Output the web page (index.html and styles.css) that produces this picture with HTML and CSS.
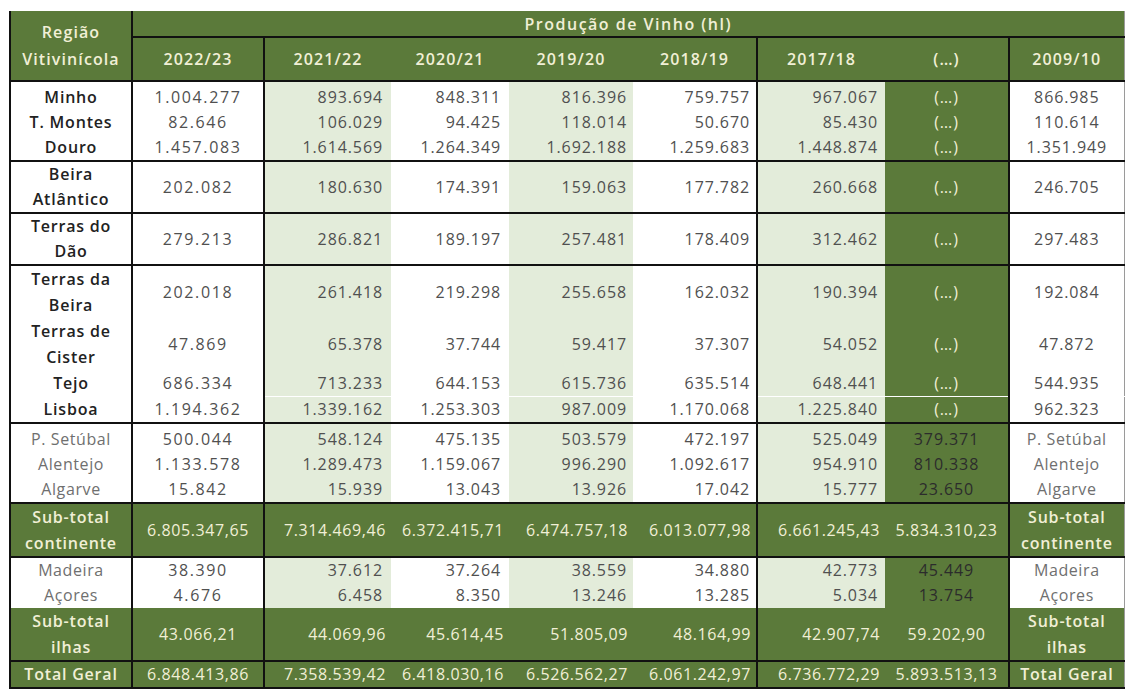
FILE: index.html
```html
<!DOCTYPE html>
<html lang="pt">
<head>
<meta charset="utf-8">
<title>Produção de Vinho</title>
<link rel="stylesheet" href="styles.css">
</head>
<body>
<table class="wine">
  <colgroup>
    <col class="w-reg"><col class="w1"><col class="w2"><col class="w3"><col class="w4"><col class="w5"><col class="w6"><col class="w7"><col class="w8">
  </colgroup>
  <thead>
    <tr class="h1">
      <th class="region" rowspan="2">Região<br>Vitivinícola</th>
      <th class="prod" colspan="8">Produção de Vinho (hl)</th>
    </tr>
    <tr class="h2">
      <th class="bl">2022/23</th>
      <th class="bl">2021/22</th>
      <th>2020/21</th>
      <th>2019/20</th>
      <th>2018/19</th>
      <th class="bl">2017/18</th>
      <th>(…)</th>
      <th class="bl">2009/10</th>
    </tr>
  </thead>
  <tbody>
    <tr class="bt pad-t"><td>Minho</td><td>1.004.277</td><td>893.694</td><td>848.311</td><td>816.396</td><td>759.757</td><td>967.067</td><td>(…)</td><td>866.985</td></tr>
    <tr><td>T. Montes</td><td>82.646</td><td>106.029</td><td>94.425</td><td>118.014</td><td>50.670</td><td>85.430</td><td>(…)</td><td>110.614</td></tr>
    <tr><td>Douro</td><td>1.457.083</td><td>1.614.569</td><td>1.264.349</td><td>1.692.188</td><td>1.259.683</td><td>1.448.874</td><td>(…)</td><td>1.351.949</td></tr>
    <tr class="bt"><td>Beira<br>Atlântico</td><td>202.082</td><td>180.630</td><td>174.391</td><td>159.063</td><td>177.782</td><td>260.668</td><td>(…)</td><td>246.705</td></tr>
    <tr class="bt"><td>Terras do<br>Dão</td><td>279.213</td><td>286.821</td><td>189.197</td><td>257.481</td><td>178.409</td><td>312.462</td><td>(…)</td><td>297.483</td></tr>
    <tr class="bt lh26"><td>Terras da<br>Beira</td><td>202.018</td><td>261.418</td><td>219.298</td><td>255.658</td><td>162.032</td><td>190.394</td><td>(…)</td><td>192.084</td></tr>
    <tr class="lh26"><td>Terras de<br>Cister</td><td>47.869</td><td>65.378</td><td>37.744</td><td>59.417</td><td>37.307</td><td>54.052</td><td>(…)</td><td>47.872</td></tr>
    <tr class="lh26"><td>Tejo</td><td>686.334</td><td>713.233</td><td>644.153</td><td>615.736</td><td>635.514</td><td>648.441</td><td>(…)</td><td>544.935</td></tr>
    <tr class="wt"><td>Lisboa</td><td>1.194.362</td><td>1.339.162</td><td>1.253.303</td><td>987.009</td><td>1.170.068</td><td>1.225.840</td><td>(…)</td><td>962.323</td></tr>
    <tr class="bt pad-t minor"><td>P. Setúbal</td><td>500.044</td><td>548.124</td><td>475.135</td><td>503.579</td><td>472.197</td><td>525.049</td><td>379.371</td><td>P. Setúbal</td></tr>
    <tr class="minor"><td>Alentejo</td><td>1.133.578</td><td>1.289.473</td><td>1.159.067</td><td>996.290</td><td>1.092.617</td><td>954.910</td><td>810.338</td><td>Alentejo</td></tr>
    <tr class="minor"><td>Algarve</td><td>15.842</td><td>15.939</td><td>13.043</td><td>13.926</td><td>17.042</td><td>15.777</td><td>23.650</td><td>Algarve</td></tr>
    <tr class="bt tot lh26"><td>Sub-total<br>continente</td><td>6.805.347,65</td><td>7.314.469,46</td><td>6.372.415,71</td><td>6.474.757,18</td><td>6.013.077,98</td><td>6.661.245,43</td><td>5.834.310,23</td><td>Sub-total<br>continente</td></tr>
    <tr class="bt minor"><td>Madeira</td><td>38.390</td><td>37.612</td><td>37.264</td><td>38.559</td><td>34.880</td><td>42.773</td><td>45.449</td><td>Madeira</td></tr>
    <tr class="minor"><td>Açores</td><td>4.676</td><td>6.458</td><td>8.350</td><td>13.246</td><td>13.285</td><td>5.034</td><td>13.754</td><td>Açores</td></tr>
    <tr class="tot lh26"><td>Sub-total<br>ilhas</td><td>43.066,21</td><td>44.069,96</td><td>45.614,45</td><td>51.805,09</td><td>48.164,99</td><td>42.907,74</td><td>59.202,90</td><td>Sub-total<br>ilhas</td></tr>
    <tr class="bt tot"><td>Total Geral</td><td>6.848.413,86</td><td>7.358.539,42</td><td>6.418.030,16</td><td>6.526.562,27</td><td>6.061.242,97</td><td>6.736.772,29</td><td>5.893.513,13</td><td>Total Geral</td></tr>
  </tbody>
</table>
</body>
</html>
```
FILE: styles.css
```css
html, body {
  margin: 0;
  padding: 0;
  background: #ffffff;
}

body {
  padding: 11px 0 0 9px;
  font-family: "Open Sans", "Noto Sans", sans-serif;
}

.wine {
  border-collapse: collapse;
  table-layout: fixed;
  width: 1114px;
  border-left: 2px solid #111;
  border-bottom: 2px solid #111;
  border-right: 1px solid #9a9a9a;
  font-size: 16px;
}

.w-reg { width: 122px; }
.w1 { width: 132px; }
.w2 { width: 127px; }
.w3 { width: 118px; }
.w4 { width: 124px; }
.w5 { width: 124px; }
.w6 { width: 128px; }
.w7 { width: 124px; }
.w8 { width: 115px; }

/* header */
.wine th {
  background: #5b7a3a;
  color: #f1efd6;
  font-weight: 600;
  letter-spacing: 1.1px;
  padding: 0;
  text-align: center;
  vertical-align: middle;
}

.h1 { height: 26px; }
.h2 { height: 44px; }

.region {
  line-height: 27px;
  letter-spacing: 0.8px;
  border-right: 2px solid #111;
}

.wine th.prod {
  letter-spacing: 1.5px;
  border-bottom: 2px solid #111;
}

.wine th.bl { border-left: 2px solid #111; }

/* body */
.wine td {
  padding: 0;
  line-height: 25px;
  color: #505050;
  letter-spacing: 0.9px;
  vertical-align: middle;
  text-align: right;
  white-space: nowrap;
}

.wine .lh26 td { line-height: 26px; }

.wine td:nth-child(1) {
  text-align: center;
  color: #222;
  font-weight: 600;
  letter-spacing: 0.8px;
  white-space: normal;
}

.wine td:nth-child(2) {
  text-align: center;
  border-left: 2px solid #111;
  letter-spacing: 1.6px;
}

.wine td:nth-child(3) {
  background: #e3ecda;
  border-left: 2px solid #111;
  padding-right: 8px;
}

.wine td:nth-child(4) { padding-right: 8px; }

.wine td:nth-child(5) {
  background: #e3ecda;
  padding-right: 6px;
}

.wine td:nth-child(6) { padding-right: 6px; }

.wine td:nth-child(7) {
  background: #e3ecda;
  border-left: 2px solid #111;
  padding-right: 7px;
}

.wine td:nth-child(8) {
  background: #5b7a3a;
  color: #f1efd6;
  text-align: center;
}

.wine td:nth-child(9) {
  text-align: center;
  border-left: 2px solid #111;
  white-space: normal;
}

.bt td { border-top: 2px solid #111; }
.wt td { border-top: 1px solid #ffffff; }

.pad-t td { padding-top: 3px; }

.minor td:nth-child(1),
.minor td:nth-child(9) {
  color: #6f6f6f;
  font-weight: 400;
  letter-spacing: 0.6px;
}

.minor td:nth-child(8) { color: #2c2c2c; }

.wine .tot td {
  background: #5b7a3a;
  color: #f1efd6;
  font-weight: 500;
  letter-spacing: 0.6px;
}

.wine .tot td:nth-child(1),
.wine .tot td:nth-child(9) {
  color: #f1efd6;
  font-weight: 600;
  letter-spacing: 0.8px;
}

.wine .tot td:nth-child(3),
.wine .tot td:nth-child(4),
.wine .tot td:nth-child(5),
.wine .tot td:nth-child(6),
.wine .tot td:nth-child(7) {
  padding-right: 5px;
}
```
